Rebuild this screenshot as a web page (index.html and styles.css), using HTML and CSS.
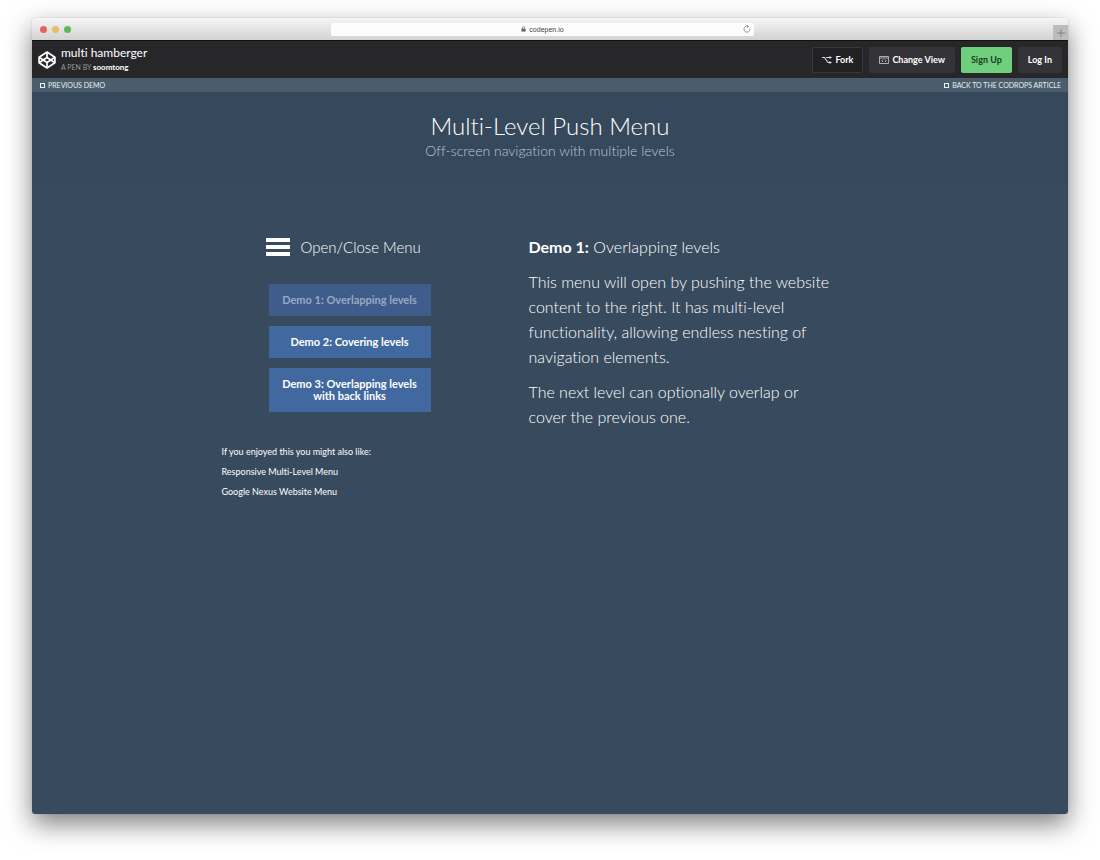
FILE: index.html
```html
<!DOCTYPE html>
<html lang="en">
<head>
<meta charset="utf-8">
<meta name="viewport" content="width=device-width, initial-scale=1">
<title>multi hamberger</title>
<link rel="stylesheet" href="styles.css">
</head>
<body>
<div class="window">
  <div class="chrome">
    <div class="lights"><span class="light red"></span><span class="light yellow"></span><span class="light green"></span></div>
    <div class="address">
      <svg class="lock" viewBox="0 0 6 7" aria-hidden="true"><path d="M1.6 3V2a1.4 1.4 0 0 1 2.8 0v1" fill="none" stroke="#666" stroke-width=".9"/><rect x=".5" y="3" width="5" height="3.6" fill="#666"/></svg>
      <span>codepen.io</span>
      <button class="reload" aria-label="Reload"><svg viewBox="0 0 8 8"><path d="M5.2 1.4A3 3 0 1 0 6.9 3.5M3.9.2 5.4 1.4 4.2 2.8" fill="none" stroke="#777" stroke-width=".8"/></svg></button>
    </div>
    <button class="new-tab" aria-label="New tab"><svg viewBox="0 0 8 8"><path d="M4 0v8M0 4h8" stroke="#777" stroke-width=".8"/></svg></button>
  </div>
  <header class="pen-bar">
    <a class="logo" href="#" aria-label="CodePen"><svg viewBox="0 0 20 20"><g fill="none" stroke="#fff" stroke-width="1.9" stroke-linejoin="round"><path d="M10 1.2 18.8 7v6L10 18.8 1.2 13V7z"/><path d="M1.2 7 10 12.8 18.8 7M1.2 13 10 7.2 18.8 13M10 1.2v6M10 12.8v6"/></g></svg></a>
    <div class="pen-info">
      <div class="pen-title">multi hamberger</div>
      <div class="pen-author">A PEN BY <a href="#">soomtong</a></div>
    </div>
    <nav class="actions">
      <button class="btn fork"><svg viewBox="0 0 10 8"><path d="M0 1.5h2.5L6 6.5h2.5M4.2 1.5h4.3" fill="none" stroke="#ddd" stroke-width="1.1"/><path d="M7.5 0 10 1.5 7.5 3zM7.5 5 10 6.5 7.5 8z" fill="#ddd"/></svg>Fork</button>
      <button class="btn view"><svg viewBox="0 0 10 8"><path d="M.5.5h9v7h-9zM.5 2h9M4 3.5 2.8 4.8 4 6M6 3.5l1.2 1.3L6 6" fill="none" stroke="#bbb" stroke-width=".9"/></svg>Change View</button>
      <button class="btn signup">Sign Up</button>
      <button class="btn login">Log In</button>
    </nav>
  </header>
  <div class="page">
    <nav class="top-links">
      <a href="#"><span class="glyph"></span>PREVIOUS DEMO</a>
      <a href="#"><span class="glyph"></span>BACK TO THE CODROPS ARTICLE</a>
    </nav>
    <header class="hero">
      <h1>Multi-Level Push Menu</h1>
      <p>Off-screen navigation with multiple levels</p>
    </header>
    <main class="content">
      <section class="left">
        <a class="trigger" href="#"><span class="bars"><i></i><i></i><i></i></span>Open/Close Menu</a>
        <nav class="demos">
          <a class="current" href="#">Demo 1: Overlapping levels</a>
          <a href="#">Demo 2: Covering levels</a>
          <a href="#">Demo 3: Overlapping levels<br>with back links</a>
        </nav>
        <div class="related">
          <p>If you enjoyed this you might also like:</p>
          <p><a href="#">Responsive Multi-Level Menu</a></p>
          <p><a href="#">Google Nexus Website Menu</a></p>
        </div>
      </section>
      <section class="right">
        <p><strong>Demo 1:</strong> Overlapping levels</p>
        <p>This menu will open by pushing the website content to the right. It has multi-level functionality, allowing endless nesting of navigation elements.</p>
        <p>The next level can optionally overlap or cover the previous one.</p>
      </section>
    </main>
  </div>
</div>
</body>
</html>
```
FILE: styles.css
```css
* { box-sizing: border-box; }

body {
  margin: 0;
  padding: 18px 32px 46px;
  min-height: 100vh;
  display: flex;
  background: #fff;
  font-family: Lato, sans-serif;
  font-variant-ligatures: none;
  color: #fff;
}

a { color: inherit; text-decoration: none; }
p, h1 { margin: 0; }
button { border: 0; padding: 0; font: inherit; color: inherit; cursor: pointer; }
svg { display: block; }

.window {
  flex: 1;
  min-width: 0;
  display: flex;
  flex-direction: column;
  border-radius: 3px;
  overflow: hidden;
  box-shadow: 0 10px 26px rgba(0, 0, 0, .5), 0 0 1px rgba(0, 0, 0, .4);
}

/* Browser chrome */
.chrome {
  height: 23px;
  display: grid;
  grid-template-columns: 1fr 423px 1fr 15px;
  align-items: center;
  background: linear-gradient(#f6f6f6, #d2d2d2);
  border-bottom: 1px solid #111;
}
.lights { display: flex; gap: 5px; padding-left: 8px; }
.light { width: 7px; height: 7px; border-radius: 50%; }
.red { background: #e5635f; }
.yellow { background: #e6bd62; }
.green { background: #5cb955; }
.address {
  position: relative;
  display: flex;
  align-items: center;
  justify-content: center;
  gap: 3px;
  height: 13px;
  border-radius: 2px;
  background: #fdfdfd;
  color: #444;
  font: 7px/13px "Liberation Sans", sans-serif;
}
.lock { width: 5px; height: 6px; }
.reload { position: absolute; right: 3px; top: 2px; background: none; }
.reload svg { width: 8px; height: 8px; }
.new-tab {
  grid-column: 4;
  align-self: end;
  width: 15px;
  height: 15px;
  background: #bcbcbc;
  display: flex;
  align-items: center;
  justify-content: center;
}
.new-tab svg { width: 8px; height: 8px; }

/* Pen header */
.pen-bar {
  height: 37px;
  display: flex;
  align-items: center;
  padding: 0 6px;
  background: #27272a;
}
.logo svg { width: 18px; height: 18px; }
.pen-info { padding: 0 0 1px 5px; }
.pen-title { font-size: 12px; line-height: 15px; }
.pen-author { font-size: 7px; line-height: 14px; color: #999; }
.pen-author a { color: #fff; font-weight: 700; font-size: 8px; }
.actions { margin-left: auto; display: flex; gap: 6px; }
.btn {
  height: 26px;
  display: flex;
  align-items: center;
  justify-content: center;
  gap: 3px;
  padding: 0 10px;
  border-radius: 2px;
  background: #343438;
  font-size: 9px;
  font-weight: 700;
}
.btn svg { width: 10px; height: 8px; }
.btn.fork { padding: 0 9px; background: #212124; border: 1px solid #38383c; }
.btn.signup { background: #70cf7d; color: #173d22; }

/* Demo page */
.page { flex: 1; background: #384a5e; }
.top-links {
  display: flex;
  justify-content: space-between;
  height: 14px;
  padding: 0 7px 0 8px;
  background: #4b5d6d;
  font-size: 7px;
  line-height: 14px;
  color: #e9eef2;
}
.top-links a { display: flex; align-items: center; gap: 3px; }
.glyph { width: 5px; height: 5px; border: 1px solid #e9eef2; }
.hero { padding: 19px 20px 23px; text-align: center; background: #36485c; }
.hero h1 { font-size: 24px; line-height: 30px; font-weight: 300; }
.hero p { font-size: 14px; line-height: 20px; font-weight: 300; color: #bcc8d3; }

.content {
  display: grid;
  grid-template-columns: 256px 310px;
  gap: 51px;
  justify-content: center;
  padding: 50px 40px 50px 0;
}
.left { display: flex; flex-direction: column; }
.trigger {
  display: flex;
  align-items: center;
  gap: 11px;
  padding-left: 44px;
  font-size: 15px;
  line-height: 26px;
  font-weight: 300;
}
.bars { display: flex; flex-direction: column; gap: 3px; width: 24px; }
.bars i { height: 4px; background: #fff; }
.demos { display: grid; gap: 10px; width: 162px; margin: 24px auto 0; }
.demos a {
  padding: 10px 4px;
  background: #4169a0;
  font-size: 11px;
  line-height: 12px;
  font-weight: 700;
  text-align: center;
}
.demos .current { background: #3e5d8b; color: #99a9c2; }
.related { margin-top: 30px; font-size: 9px; line-height: 20px; }
.right { font-size: 16px; line-height: 25px; font-weight: 300; }
.right p + p { margin-top: 10px; }
.right strong { font-weight: 700; }
```
